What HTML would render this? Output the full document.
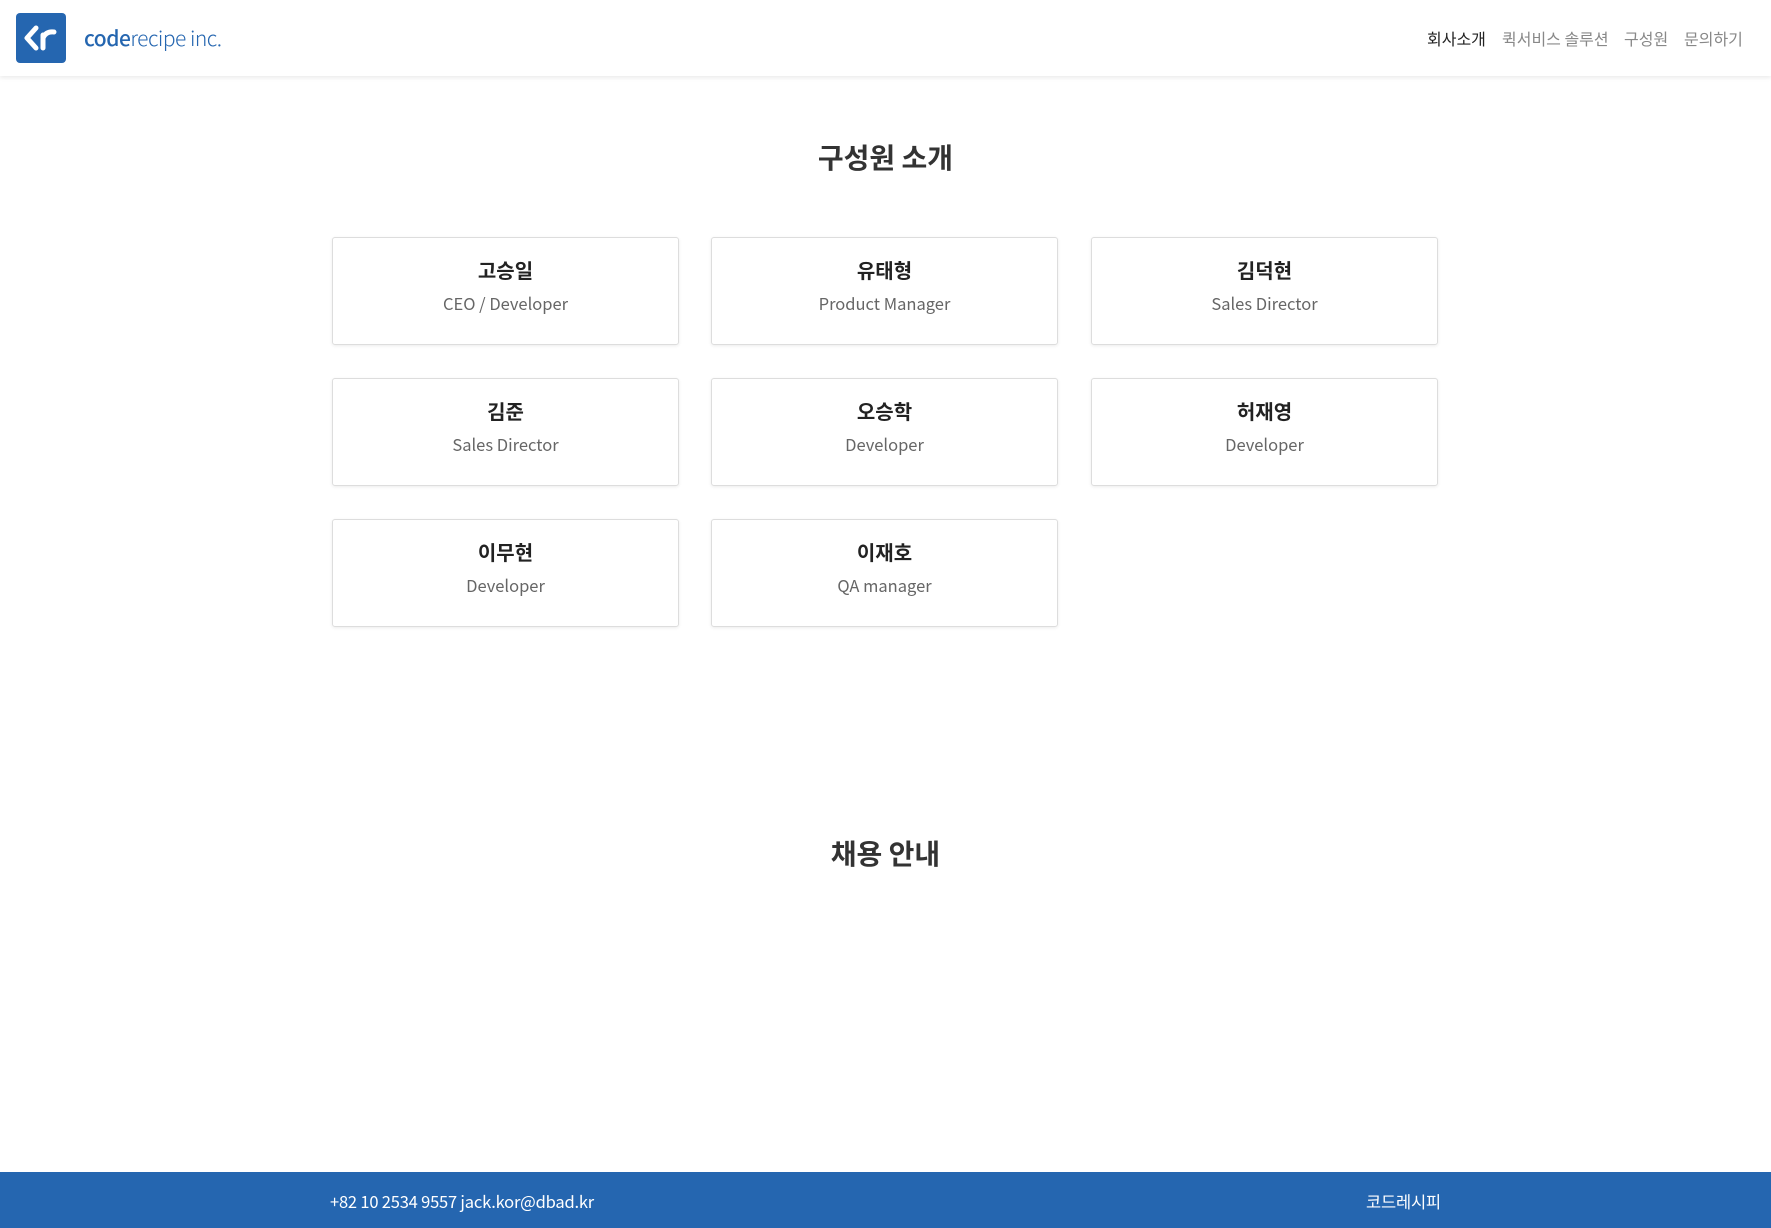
<!DOCTYPE html>
<html><head><meta charset="utf-8"><style>
*{margin:0;padding:0;box-sizing:border-box}
body{width:1771px;height:1228px;position:relative;background:#fff;font-family:"Noto Sans CJK KR","Liberation Sans",sans-serif;overflow:hidden;color:#222}
.hdr{position:absolute;left:0;top:0;width:1771px;height:76px;background:#fff;box-shadow:0 2px 4px rgba(0,0,0,0.08)}
.logo{position:absolute;left:16px;top:13px;width:50px;height:50px;background:#2566b0;border-radius:4px}
.brand{position:absolute;left:84px;top:23px;font-size:21px;line-height:30px;color:#2566b0;font-weight:300;letter-spacing:-0.5px}
.brand b{font-weight:500}
.nav{position:absolute;top:27px;font-size:16px;line-height:22px;color:#888}
h2{position:absolute;width:1771px;text-align:center;font-size:28px;line-height:40px;font-weight:bold;color:#333}
.card{position:absolute;width:347px;height:108px;border:1px solid #ddd;border-radius:3px;box-shadow:0 1px 3px rgba(0,0,0,0.08);text-align:center}
.card .n{margin-top:18px;font-size:20px;line-height:28px;font-weight:bold;color:#222}
.card .r{margin-top:7px;font-size:16.5px;line-height:24px;color:#666}
.ft{position:absolute;left:0;top:1172px;width:1771px;height:56px;background:#2566b0;color:#fff;font-size:16.5px;line-height:24px;letter-spacing:-0.2px}
</style></head><body>
<div class="hdr">
<div class="logo"><svg width="50" height="50" viewBox="0 0 50 50"><path d="M20 15 L11 25 L20 35" fill="none" stroke="#fff" stroke-width="5" stroke-linejoin="round" stroke-linecap="round"/><path d="M27 35 V22 M27 25 Q30 18 38 19" fill="none" stroke="#fff" stroke-width="5" stroke-linecap="round"/></svg></div>
<div class="brand"><b>code</b>recipe inc.</div>
<div class="nav" style="left:1427px;color:#222">회사소개</div>
<div class="nav" style="left:1502px">퀵서비스 솔루션</div>
<div class="nav" style="left:1624px">구성원</div>
<div class="nav" style="left:1684px">문의하기</div>
</div>
<h2 style="top:137px">구성원 소개</h2>
<div class="card" style="left:332px;top:237px"><div class="n">고승일</div><div class="r">CEO / Developer</div></div>
<div class="card" style="left:711px;top:237px"><div class="n">유태형</div><div class="r">Product Manager</div></div>
<div class="card" style="left:1091px;top:237px"><div class="n">김덕현</div><div class="r">Sales Director</div></div>
<div class="card" style="left:332px;top:378px"><div class="n">김준</div><div class="r">Sales Director</div></div>
<div class="card" style="left:711px;top:378px"><div class="n">오승학</div><div class="r">Developer</div></div>
<div class="card" style="left:1091px;top:378px"><div class="n">허재영</div><div class="r">Developer</div></div>
<div class="card" style="left:332px;top:519px"><div class="n">이무현</div><div class="r">Developer</div></div>
<div class="card" style="left:711px;top:519px"><div class="n">이재호</div><div class="r">QA manager</div></div>
<h2 style="top:833px">채용 안내</h2>
<div class="ft"><span style="position:absolute;left:330px;top:17px">+82 10 2534 9557 jack.kor@dbad.kr</span><span style="position:absolute;left:1366px;top:17px">코드레시피</span></div>
</body></html>
